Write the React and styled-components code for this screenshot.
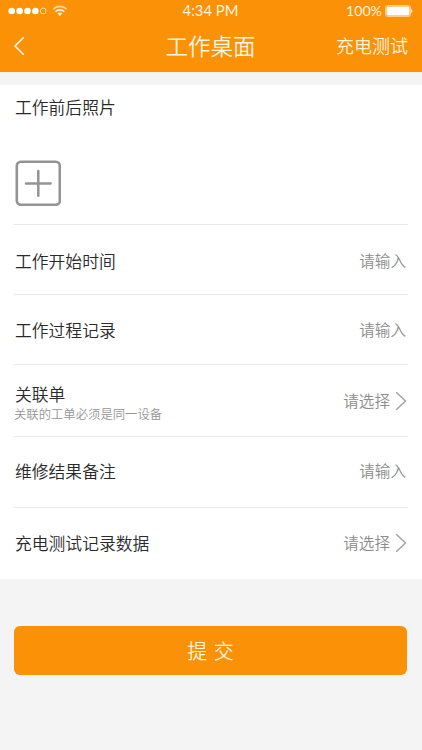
import React from "react";
import styled, { createGlobalStyle } from "styled-components";

const rows = [
  { label: "工作开始时间", value: "请输入", height: 70, top: 2 },
  { label: "工作过程记录", value: "请输入", height: 70 },
  {
    label: "关联单",
    note: "关联的工单必须是同一设备",
    value: "请选择",
    arrow: true,
    height: 72,
  },
  { label: "维修结果备注", value: "请输入", height: 71, bottom: 2 },
  { label: "充电测试记录数据", value: "请选择", arrow: true, height: 72, bottom: 2 },
];

function StatusBar() {
  return (
    <Status>
      <Signal>
        <svg width="60" height="12" viewBox="0 0 60 12">
          {[3.7, 11.6, 19.5, 27.4].map((x) => (
            <circle key={x} cx={x} cy="6" r="3.3" fill="#fff" />
          ))}
          <circle cx="35.2" cy="6" r="2.9" fill="none" stroke="#ffe7c4" strokeWidth="0.9" />
          <g fill="none" stroke="#fff3e0" strokeWidth="1.6">
            <path d="M45.3 4.3a9 9 0 0 1 13.2 0" stroke="#ffd79c" />
            <path d="M47.5 6.7a6.2 6.2 0 0 1 8.8 0" />
          </g>
          <path d="M49.5 8.4a3.7 3.7 0 0 1 4.8 0L51.9 11z" fill="#fff" />
        </svg>
      </Signal>
      <Clock>4:34 PM</Clock>
      <Power>
        <span>100%</span>
        <svg width="28" height="12" viewBox="0 0 28 12">
          <rect x="0.5" y="0.6" width="25" height="10.8" rx="1.8" fill="none" stroke="#ffd596" />
          <rect x="1.5" y="1.6" width="23" height="8.8" rx="0.8" fill="#fff" />
          <path d="M26.2 4c1.6.5 1.6 3.5 0 4z" fill="#fff" />
        </svg>
      </Power>
    </Status>
  );
}

function Row(props) {
  const { label, note, value, arrow, height, top, bottom } = props;
  return (
    <RowBox $height={height} $top={top} $bottom={bottom}>
      <Info $note={note}>
        <Label>{label}</Label>
        {note && <Note>{note}</Note>}
      </Info>
      <Value $arrow={arrow}>
        <span>{value}</span>
        {arrow && (
          <svg width="12" height="20" viewBox="0 0 12 20">
            <path d="M1.2 1.2L10.5 10L1.2 18.8" fill="none" stroke="#a0a0a0" strokeWidth="1.4" />
          </svg>
        )}
      </Value>
    </RowBox>
  );
}

function App() {
  return (
    <Page>
      <GlobalStyle />
      <Header>
        <StatusBar />
        <NavBar>
          <Back aria-label="返回">
            <svg width="12" height="20" viewBox="0 0 12 20">
              <path
                d="M10.8 1.3L2 10l8.8 8.7"
                fill="none"
                stroke="#fff8ec"
                strokeWidth="1.6"
              />
            </svg>
          </Back>
          <Title>工作桌面</Title>
          <Action>充电测试</Action>
        </NavBar>
      </Header>
      <Form>
        <Photos>
          <Label>工作前后照片</Label>
          <AddPhoto aria-label="添加照片">
            <svg width="46" height="46" viewBox="0 0 46 46" fill="none" stroke="#949494">
              <rect x="1.8" y="1.8" width="43" height="43" rx="4" strokeWidth="2.6" />
              <path d="M23.3 11.1v24.6M11 23.4h24.6" strokeWidth="2.5" strokeLinecap="round" />
            </svg>
          </AddPhoto>
        </Photos>
        {rows.map((row) => (
          <Row key={row.label} {...row} />
        ))}
      </Form>
      <Submit>提 交</Submit>
    </Page>
  );
}

const GlobalStyle = createGlobalStyle`
  body {
    margin: 0;
    background: #f4f4f4;
  }
  * {
    box-sizing: border-box;
  }
  button {
    padding: 0;
    border: none;
    background: none;
    font: inherit;
  }
  svg {
    display: block;
    flex-shrink: 0;
  }
`;

const Page = styled.div`
  width: 100%;
  height: 750px;
  overflow: hidden;
  background: #f4f4f4;
  font-family: "Noto Sans CJK SC", sans-serif;
  font-weight: 350;
  white-space: nowrap;
`;

const Header = styled.header`
  height: 72px;
  background: #fa9106;
  color: #fff4e0;
`;

const Status = styled.div`
  display: grid;
  grid-template-columns: 1fr auto 1fr;
  align-items: center;
  height: 22px;
  padding: 0 9px 0 8px;
  font-family: Lato, sans-serif;
  font-weight: 400;
`;

const Signal = styled.div`
  display: flex;
`;

const Clock = styled.span`
  padding-bottom: 2px;
  font-size: 14.8px;
  line-height: 20px;
`;

const Power = styled.div`
  display: flex;
  justify-content: flex-end;
  align-items: center;
  gap: 3px;
  font-size: 14.2px;

  span {
    line-height: 18px;
  }
`;

const NavBar = styled.nav`
  display: grid;
  grid-template-columns: 1fr auto 1fr;
  align-items: center;
  height: 48px;
  padding: 0 14px 0 13px;
`;

const Back = styled.button`
  justify-self: start;
`;

const Title = styled.h1`
  margin: 0;
  padding-bottom: 3px;
  font-size: 22.5px;
  font-weight: 350;
  line-height: 32px;
`;

const Action = styled.span`
  justify-self: end;
  padding-bottom: 2px;
  font-size: 18px;
  line-height: 26px;
`;

const Form = styled.section`
  height: 494px;
  margin-top: 13px;
  padding: 0 14px;
  background: #fff;
`;

const Photos = styled.div`
  height: 140px;
  padding-top: 10px;
  border-bottom: 1px solid #e9e9e9;
`;

const AddPhoto = styled.button`
  display: block;
  margin: 41px 0 0 1px;
`;

const RowBox = styled.div`
  display: flex;
  align-items: center;
  justify-content: space-between;
  height: ${(props) => props.$height}px;
  padding-top: ${(props) => props.$top || 0}px;
  padding-bottom: ${(props) => props.$bottom || 0}px;
  border-bottom: 1px solid #e9e9e9;

  &:last-child {
    border-bottom: none;
  }
`;

const Info = styled.div`
  padding-top: ${(props) => (props.$note ? 3 : 0)}px;
`;

const Label = styled.div`
  padding-left: 1px;
  color: #2a2a2a;
  font-size: 16.8px;
  line-height: 24px;
`;

const Note = styled.div`
  color: #969696;
  font-size: 12.35px;
  line-height: 17px;
`;

const Value = styled.div`
  display: flex;
  align-items: center;
  gap: 5px;
  padding-right: ${(props) => (props.$arrow ? 1 : 2)}px;
  color: #8c8c8c;
  font-size: 15.6px;
  line-height: 22px;

  span {
    padding-bottom: 2px;
  }
`;

const Submit = styled.button`
  display: block;
  width: 393px;
  height: 49px;
  margin: 47px 0 0 14px;
  border-radius: 6px;
  background: #fa9106;
  color: #fff4e0;
  font-size: 20px;
  word-spacing: 2px;
`;

export default App;
